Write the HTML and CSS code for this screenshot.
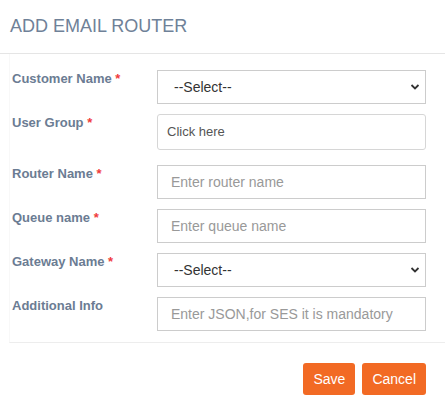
FILE: index.html
```html
<!DOCTYPE html>
<html>
<head>
<meta charset="utf-8">
<link rel="stylesheet" href="styles.css">
</head>
<body>
<div class="modal">
  <div class="header"><h4 class="title">ADD EMAIL ROUTER</h4></div>
  <div class="form">
    <div class="row">
      <label class="label">Customer Name <span class="req">*</span></label>
      <div class="field select-wrap">
        <select class="control select"><option>--Select--</option></select>
        <svg class="chev" width="10" height="7" viewBox="0 0 10 7"><path d="M1.5 1.5L5 5l3.5-3.5" fill="none" stroke="#333" stroke-width="1.8"/></svg>
      </div>
    </div>
    <div class="row row-tall">
      <label class="label">User Group <span class="req">*</span></label>
      <div class="field"><div class="control picker">Click here</div></div>
    </div>
    <div class="row">
      <label class="label">Router Name <span class="req">*</span></label>
      <div class="field"><input class="control input" placeholder="Enter router name"></div>
    </div>
    <div class="row">
      <label class="label">Queue name <span class="req">*</span></label>
      <div class="field"><input class="control input" placeholder="Enter queue name"></div>
    </div>
    <div class="row">
      <label class="label">Gateway Name <span class="req">*</span></label>
      <div class="field select-wrap">
        <select class="control select"><option>--Select--</option></select>
        <svg class="chev" width="10" height="7" viewBox="0 0 10 7"><path d="M1.5 1.5L5 5l3.5-3.5" fill="none" stroke="#333" stroke-width="1.8"/></svg>
      </div>
    </div>
    <div class="row">
      <label class="label">Additional Info</label>
      <div class="field"><input class="control input" placeholder="Enter JSON,for SES it is mandatory"></div>
    </div>
  </div>
  <div class="footer">
    <button class="btn">Save</button>
    <button class="btn">Cancel</button>
  </div>
</div>
</body>
</html>
```
FILE: styles.css
```css
* { box-sizing: border-box; }
html, body { margin: 0; padding: 0; background: #fff; }
body { font-family: "Liberation Sans", Arial, sans-serif; }

.modal { width: 445px; }

.header {
  padding: 16px 10px 17px;
  border-bottom: 1px solid #e5e5e5;
}
.title {
  margin: 0;
  font-size: 18px;
  line-height: 20px;
  font-weight: normal;
  color: #6f8198;
}

.form {
  margin-left: 9px;
  border-left: 1px solid #f8f8f8;
  border-bottom: 1px solid #ededed;
  padding: 16px 19px 11px 2px;
}

.row {
  display: flex;
  align-items: flex-start;
  margin-bottom: 10px;
}
.row:last-child { margin-bottom: 0; }
.row-tall { margin-bottom: 15px; }

.label {
  width: 145px;
  flex: none;
  font-size: 13px;
  line-height: 18px;
  font-weight: bold;
  color: #6b7c93;
}
.req { color: #f03c3c; }

.field { flex: 1; position: relative; }

.control {
  display: block;
  width: 100%;
  height: 34px;
  margin: 0;
  border: 1px solid #ccc;
  background: #fff;
  font-family: "Liberation Sans", Arial, sans-serif;
  font-size: 14px;
  color: #333;
  outline: none;
}
.select {
  appearance: none;
  -webkit-appearance: none;
  border-radius: 0;
  padding: 0 24px 0 16px;
}
.chev {
  position: absolute;
  right: 6px;
  top: 50%;
  transform: translateY(-50%);
  pointer-events: none;
}
.picker {
  height: 36px;
  border-color: #d6d6d6;
  border-radius: 3px;
  padding: 0 9px;
  font-size: 13px;
  line-height: 34px;
  color: #555;
}
.input {
  padding: 0 13px;
  border-radius: 0;
}
.input::placeholder { color: #999; }

.footer {
  display: flex;
  justify-content: flex-end;
  gap: 7px;
  padding: 20px 19px 0 0;
}
.btn {
  height: 32px;
  padding: 0 10px;
  border: none;
  border-radius: 3px;
  background: #f26a24;
  color: #fff;
  font-family: "Liberation Sans", Arial, sans-serif;
  font-size: 14px;
  cursor: pointer;
}
```
